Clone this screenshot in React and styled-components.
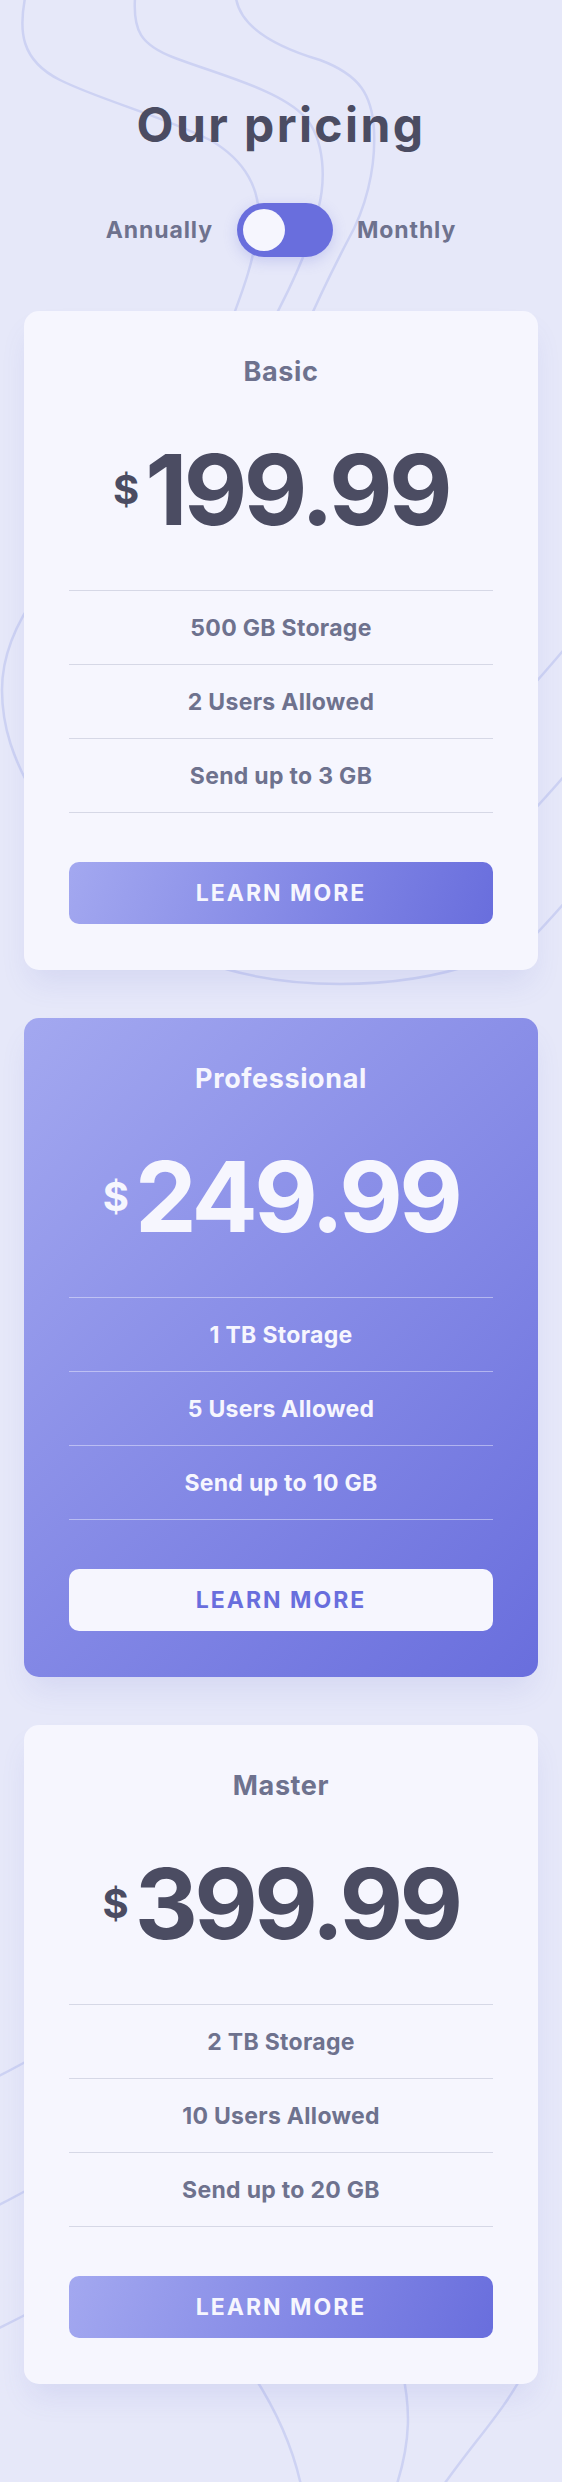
import styled, { createGlobalStyle } from 'styled-components';

const GlobalStyle = createGlobalStyle`
  html, body {
    margin: 0;
    padding: 0;
  }
  body {
    background: #e6e8f9;
    font-family: Inter, "Open Sans", sans-serif;
    -webkit-font-smoothing: antialiased;
  }
  * {
    box-sizing: border-box;
  }
`;

const Page = styled.div`
  position: relative;
  width: 562px;
  min-height: 2482px;
  overflow: hidden;
`;

const Backdrop = styled.svg`
  position: absolute;
  top: 0;
  left: 0;
  z-index: 0;
  pointer-events: none;
`;

const Main = styled.main`
  position: relative;
  z-index: 1;
  padding: 96px 24px 95px;
`;

const Heading = styled.h1`
  margin: 0;
  text-align: center;
  font-size: 48px;
  line-height: 58px;
  font-weight: 700;
  letter-spacing: 2.4px;
  color: #4b4c62;
`;

const Switcher = styled.div`
  display: flex;
  align-items: center;
  justify-content: center;
  gap: 24px;
  margin-top: 49px;
`;

const SwitchLabel = styled.span`
  font-size: 23px;
  font-weight: 700;
  letter-spacing: 0.9px;
  color: #6e728e;
`;

const Toggle = styled.button`
  display: flex;
  align-items: center;
  width: 96px;
  height: 54px;
  padding: 0 6px;
  border: 0;
  border-radius: 27px;
  background: #696edd;
  box-shadow: 0 4px 14px rgba(105, 110, 221, 0.25);
  justify-content: ${({ $monthly }) => ($monthly ? 'flex-end' : 'flex-start')};
  cursor: pointer;
`;

const Knob = styled.span`
  width: 42px;
  height: 42px;
  border-radius: 50%;
  background: #f6f6fe;
`;

const Cards = styled.div`
  display: flex;
  flex-direction: column;
  gap: 48px;
  margin-top: 54px;
`;

const Card = styled.section`
  display: flex;
  flex-direction: column;
  align-items: stretch;
  padding: 47px 45px 46px;
  border-radius: 15px;
  color: ${({ $featured }) => ($featured ? '#f6f6fe' : '#6e728e')};
  background: ${({ $featured }) =>
    $featured ? 'linear-gradient(135deg, #a3a8f0 0%, #696edd 100%)' : '#f6f6fe'};
  box-shadow: 0 18px 30px -6px rgba(90, 100, 200, 0.12);
`;

const PlanName = styled.h2`
  margin: 0;
  text-align: center;
  font-size: 27px;
  line-height: 27px;
  font-weight: 700;
  letter-spacing: 0.6px;
`;

const Price = styled.div`
  display: flex;
  align-items: center;
  justify-content: center;
  gap: 6px;
  margin-top: 56px;
  color: ${({ $featured }) => ($featured ? '#f6f6fe' : '#4b4c62')};
`;

const Currency = styled.span`
  font-size: 40px;
  line-height: 40px;
  font-weight: 700;
`;

const Amount = styled.span`
  font-size: 98px;
  line-height: 98px;
  font-weight: 700;
  letter-spacing: -3.6px;
`;

const Features = styled.ul`
  margin: 51px 0 0;
  padding: 0;
  list-style: none;
  border-top: 1px solid ${({ $featured }) => ($featured ? 'rgba(246, 246, 254, 0.45)' : '#d6d8e6')};
`;

const Feature = styled.li`
  display: flex;
  align-items: center;
  justify-content: center;
  height: 74px;
  font-size: 23px;
  font-weight: 700;
  letter-spacing: 0.3px;
  border-bottom: 1px solid ${({ $featured }) => ($featured ? 'rgba(246, 246, 254, 0.45)' : '#d6d8e6')};
`;

const LearnMore = styled.button`
  height: 62px;
  margin-top: 49px;
  border: 0;
  border-radius: 10px;
  font-family: inherit;
  font-size: 23px;
  font-weight: 700;
  letter-spacing: 2px;
  text-transform: uppercase;
  color: ${({ $featured }) => ($featured ? '#696edd' : '#f6f6fe')};
  background: ${({ $featured }) =>
    $featured ? '#f6f6fe' : 'linear-gradient(110deg, #a3a8f0 0%, #696edd 100%)'};
  cursor: pointer;
`;

const plans = [
  { name: 'Basic', price: '199.99', features: ['500 GB Storage', '2 Users Allowed', 'Send up to 3 GB'] },
  { name: 'Professional', price: '249.99', featured: true, features: ['1 TB Storage', '5 Users Allowed', 'Send up to 10 GB'] },
  { name: 'Master', price: '399.99', features: ['2 TB Storage', '10 Users Allowed', 'Send up to 20 GB'] }
];

function BackgroundLines() {
  return (
    <Backdrop width="562" height="2482" viewBox="0 0 562 2482" fill="none" stroke="#cdd2f3" strokeWidth="2.5">
      <path d="M25 -2 C19 30, 20 60, 60 80 C100 100, 160 115, 210 140 C245 160, 262 190, 258 225 C254 260, 245 285, 228 330" />
      <path d="M135 -2 C133 30, 140 45, 175 58 C220 75, 280 90, 305 117 C325 140, 326 180, 318 210 C312 240, 295 280, 268 330" />
      <path d="M236 -2 C240 25, 270 45, 320 60 C360 75, 372 95, 374 130 C376 170, 365 210, 348 240 C335 265, 322 290, 305 330" />
      <path d="M575 636 C560 655, 545 672, 520 700" />
      <path d="M575 763 C560 782, 545 798, 520 825" />
      <path d="M575 890 C560 909, 545 925, 520 951" />
      <path d="M40 590 C14 625, 2 660, 2 690 C2 725, 12 760, 40 805" />
      <path d="M200 960 C240 976, 290 984, 340 984 C390 984, 440 976, 480 962" />
      <path d="M-5 2078 C5 2073, 20 2065, 40 2054" />
      <path d="M-5 2207 C5 2202, 20 2194, 40 2183" />
      <path d="M-5 2330 C5 2325, 20 2318, 40 2307" />
      <path d="M250 2370 C270 2400, 292 2440, 302 2490" />
      <path d="M402 2370 C410 2405, 412 2440, 395 2490" />
      <path d="M525 2370 C505 2410, 475 2440, 440 2490" />
    </Backdrop>
  );
}

export default function App() {
  return (
    <Page>
      <GlobalStyle />
      <BackgroundLines />
      <Main>
        <Heading>Our pricing</Heading>
        <Switcher>
          <SwitchLabel>Annually</SwitchLabel>
          <Toggle type="button" aria-label="Toggle billing period">
            <Knob />
          </Toggle>
          <SwitchLabel>Monthly</SwitchLabel>
        </Switcher>
        <Cards>
          {plans.map((plan) => (
            <Card key={plan.name} $featured={plan.featured}>
              <PlanName>{plan.name}</PlanName>
              <Price $featured={plan.featured}>
                <Currency>$</Currency>
                <Amount>{plan.price}</Amount>
              </Price>
              <Features $featured={plan.featured}>
                {plan.features.map((feature) => (
                  <Feature key={feature} $featured={plan.featured}>{feature}</Feature>
                ))}
              </Features>
              <LearnMore type="button" $featured={plan.featured}>Learn More</LearnMore>
            </Card>
          ))}
        </Cards>
      </Main>
    </Page>
  );
}
